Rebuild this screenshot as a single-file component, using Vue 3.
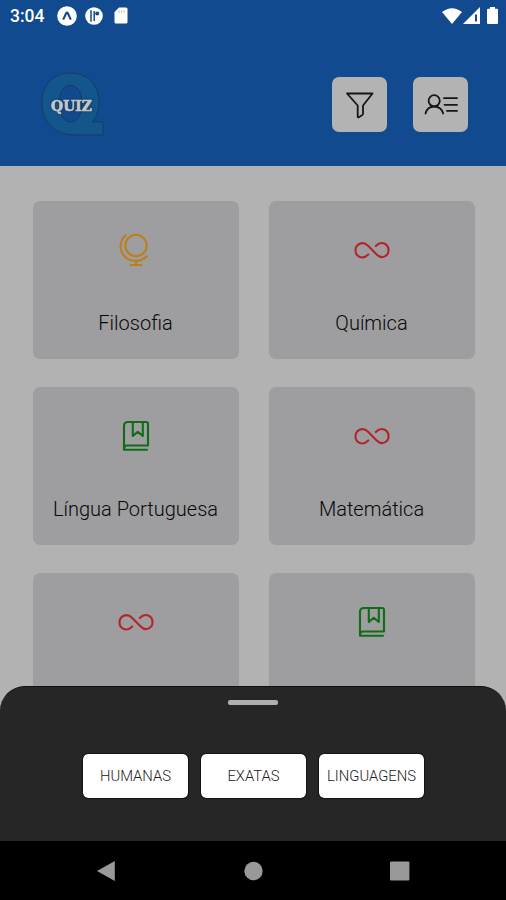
<script setup>
const subjects = [
  { name: 'Filosofia', icon: 'globe' },
  { name: 'Química', icon: 'infinite' },
  { name: 'Língua Portuguesa', icon: 'book' },
  { name: 'Matemática', icon: 'infinite' },
  { name: 'Física', icon: 'infinite' },
  { name: 'Literatura', icon: 'book' },
]
const areas = ['HUMANAS', 'EXATAS', 'LINGUAGENS']
</script>

<template>
  <div class="screen">
    <header class="header">
      <div class="status">
        <div class="status-left">
          <span class="time">3:04</span>
          <svg width="20" height="20" viewBox="0 0 20 20">
            <circle cx="10" cy="10" r="9.8" fill="#fff" />
            <path d="M6.2 13.6 9 7.5q1-1.8 2 0l2.8 6.1" fill="none" stroke="#124a90" stroke-width="2.1" />
          </svg>
          <svg width="18" height="20" viewBox="0 0 18 20">
            <circle cx="9" cy="10" r="8.8" fill="#fff" />
            <path d="M6 4.2v11.600M9.200 5v10" stroke="#124a90" stroke-width="1.5" />
            <circle cx="12.2" cy="7.600" r="2" fill="#124a90" />
          </svg>
          <svg class="sd" width="14" height="17" viewBox="0 0 14 17">
            <path d="M5 .5h7q1.500 0 1.500 1.500v13q0 1.500-1.500 1.500H2Q.5 16.500.5 15V5z" fill="#fff" />
            <path d="M5 3v3M7.500 3v3M10 3v3" stroke="#b9c9df" stroke-width="1" />
          </svg>
        </div>
        <div class="status-right">
          <svg width="20" height="16" viewBox="0 0 20 16">
            <path d="M0 4Q10-3.600 20 4L10 16z" fill="#fff" />
          </svg>
          <svg width="17" height="17" viewBox="0 0 17 17">
            <path d="M0 17 17 0v17z" fill="#fff" />
            <path d="M13 7.500v7" stroke="#124a90" stroke-width="2" />
          </svg>
          <svg class="battery" width="11" height="17" viewBox="0 0 11 17">
            <path d="M3 0h5v1.800h2q1 0 1 1V16q0 1-1 1H1q-1 0-1-1V2.800q0-1 1-1h2z" fill="#fff" />
          </svg>
        </div>
      </div>
      <div class="toolbar">
        <svg class="logo" width="66" height="66" viewBox="0 0 66 66">
          <path
            d="M30.500 2C48 2 59 14 59 31.500c0 8.500-3 15-7 19.500h11v13H35C15 64 2 51 2 32 2 14 13 2 30.500 2zm0 12.500c-7 0-11.500 7.500-11.500 18s4.500 18.500 11.500 18.500S42 43 42 32.500s-4.500-18-11.500-18z"
            fill="#12568c"
            fill-rule="evenodd"
            stroke="#123f60"
          />
          <text x="31.500" y="39.500" text-anchor="middle" textLength="41" lengthAdjust="spacingAndGlyphs">QUIZ</text>
        </svg>
        <div class="actions">
          <button class="tool">
            <svg width="30" height="30" viewBox="0 0 30 30" class="line">
              <path d="M2 3.500h25.500L18 15.500v8.300q0 1-1 1.500l-3.200 1.900q-1.100.5-1.100-.7v-11z" />
            </svg>
          </button>
          <button class="tool">
            <svg width="36" height="30" viewBox="0 0 36 30" class="line">
              <circle cx="11.200" cy="10.800" r="5.600" />
              <path d="M2.500 23.500q1.800-7 8.700-7t9 7M21 8.200H34M21.500 14.800H34M24 20.900H34" />
            </svg>
          </button>
        </div>
      </div>
    </header>

    <main class="grid">
      <article v-for="subject in subjects" :key="subject.name" class="card">
        <svg v-if="subject.icon === 'globe'" class="icon globe" viewBox="0 0 36 36">
          <circle cx="18" cy="13.500" r="10.700" />
          <path d="M7.700 3.200C1.300 8.500 1 18 6.200 24c5.600 6.300 15.800 6.500 22.600.4M18 29v3.500M12.500 33h11" />
        </svg>
        <svg v-else-if="subject.icon === 'infinite'" class="icon infinite" viewBox="0 0 36 36">
          <path d="M14.300 22.400C7.500 29 1.500 23.500 1.500 18.500c0-6 6.800-10.400 12.800-4.600l8.400 8.500c5.900 5.800 11.800.9 11.800-4.200 0-6-6.900-10.200-12.700-4.300" />
        </svg>
        <svg v-else class="icon book" viewBox="0 0 36 36">
          <path d="M29 31.700H6V8q0-4 4-4h18q2 0 2 2v21.500H9q-3 0-3 4.200M14.800 4v14l5-4.200 5 4.200V4" />
        </svg>
        <span class="name">{{ subject.name }}</span>
      </article>
    </main>

    <section class="sheet">
      <div class="handle"></div>
      <div class="areas">
        <button v-for="area in areas" :key="area" class="area">{{ area }}</button>
      </div>
    </section>

    <nav class="nav">
      <svg width="20" height="22" viewBox="0 0 20 22"><path d="M0 11 17.800 1v20z" /></svg>
      <svg width="20" height="22" viewBox="0 0 20 22"><circle cx="10.500" cy="11" r="9.200" /></svg>
      <svg width="20" height="22" viewBox="0 0 20 22"><rect x="0" y="1.500" width="19.400" height="19" rx="1" /></svg>
    </nav>
  </div>
</template>

<style>
body {
  margin: 0;
}
</style>

<style scoped>
.screen {
  position: relative;
  display: flex;
  flex-direction: column;
  width: 506px;
  height: 900px;
  overflow: hidden;
  background: #b2b2b2;
  font-family: Roboto, "Liberation Sans", sans-serif;
}
svg {
  display: block;
  flex: none;
}
button {
  padding: 0;
  border: 0;
  font-family: inherit;
}
.header {
  flex: none;
  height: 166px;
  background: #124a90;
}
.status {
  display: flex;
  justify-content: space-between;
  height: 31px;
  padding: 0 8px 0 10px;
}
.status-left,
.status-right {
  display: flex;
  align-items: center;
}
.status-left {
  gap: 8px;
}
.status-right {
  gap: 1px;
}
.time {
  width: 39px;
  color: #fff;
  font-size: 17.5px;
  font-weight: 500;
  line-height: 32px;
}
.sd {
  margin-left: 3px;
}
.battery {
  margin-left: 6px;
}
.toolbar {
  display: flex;
  align-items: flex-start;
  justify-content: space-between;
  padding: 40px 38px 0 40px;
}
.logo {
  overflow: visible;
}
.logo text {
  fill: #c3c6c8;
  stroke: #c3c6c8;
  stroke-width: 0.7px;
  font: bold 15.5px "DejaVu Serif", serif;
  filter: drop-shadow(0 0 1px #1d2f40);
}
.actions {
  display: flex;
  gap: 26px;
  padding-top: 6px;
}
.tool {
  display: flex;
  align-items: center;
  justify-content: center;
  width: 55px;
  height: 55px;
  border-radius: 7px;
  background: #b3b3b3;
}
.line {
  fill: none;
  stroke: #161616;
  stroke-width: 1.8;
  stroke-linecap: round;
  stroke-linejoin: round;
}
.grid {
  display: grid;
  flex: 1;
  grid-template-columns: 206px 206px;
  grid-auto-rows: 158px;
  gap: 28px 30px;
  min-height: 0;
  padding: 35px 0 0 32.5px;
  overflow: hidden;
}
.card {
  display: flex;
  flex-direction: column;
  align-items: center;
  box-sizing: border-box;
  padding-top: 31px;
  border-radius: 7px;
  background: #9e9ea0;
}
.icon {
  width: 36px;
  height: 36px;
  fill: none;
  stroke-width: 2.1;
  stroke-linecap: round;
  stroke-linejoin: round;
}
.globe {
  stroke: #bd7f1d;
}
.infinite {
  stroke: #b3252b;
}
.book {
  stroke: #126b19;
}
.name {
  margin-top: 43px;
  color: #080808;
  font-size: 20px;
  font-weight: 300;
  line-height: 24px;
  white-space: nowrap;
}
.sheet {
  position: absolute;
  right: 0;
  bottom: 59px;
  left: 0;
  box-sizing: border-box;
  height: 155px;
  padding-top: 13px;
  border-top: 1px solid #111;
  border-radius: 25px 25px 0 0;
  background: #262626;
}
.handle {
  width: 50px;
  height: 5px;
  margin: 0 auto;
  border-radius: 2px;
  background: #b0b0b0;
}
.areas {
  display: flex;
  justify-content: center;
  gap: 13px;
  margin-top: 49px;
  padding-left: 1px;
}
.area {
  width: 105px;
  height: 44px;
  border-radius: 5px;
  outline: 1px solid #141414;
  background: #fff;
  color: #222;
  font-size: 14.8px;
  font-weight: 300;
}
.nav {
  display: flex;
  flex: none;
  justify-content: space-between;
  box-sizing: border-box;
  height: 59px;
  padding: 19px 96.500px 0;
  background: #000;
  fill: #999;
}
</style>
